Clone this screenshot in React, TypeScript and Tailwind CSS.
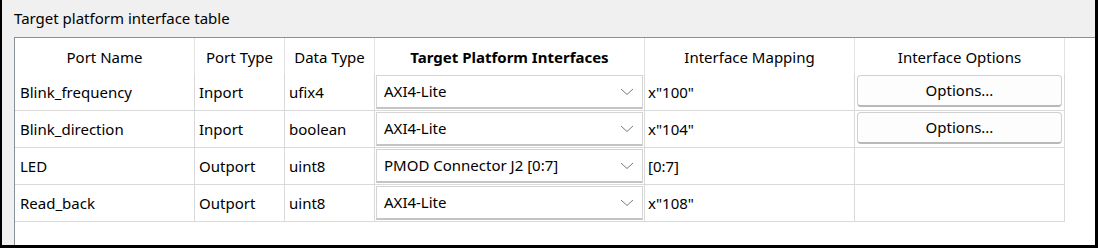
import React from "react";

const cols = ["w-[180px]", "w-[90px]", "w-[90px]", "w-[270px]", "w-[210px]", "w-[210px]"];

type Row = { name: string; type: string; dt: string; iface: string; map: string; opt: boolean };
const rows: Row[] = [
  { name: "Blink_frequency", type: "Inport", dt: "ufix4", iface: "AXI4-Lite", map: 'x"100"', opt: true },
  { name: "Blink_direction", type: "Inport", dt: "boolean", iface: "AXI4-Lite", map: 'x"104"', opt: true },
  { name: "LED", type: "Outport", dt: "uint8", iface: "PMOD Connector J2 [0:7]", map: "[0:7]", opt: false },
  { name: "Read_back", type: "Outport", dt: "uint8", iface: "AXI4-Lite", map: 'x"108"', opt: false },
];

function Chevron() {
  return (
    <svg width="14" height="8" viewBox="0 0 14 8" className="shrink-0">
      <path d="M1 1 L7 6.5 L13 1" fill="none" stroke="#7a7a7a" strokeWidth="1" />
    </svg>
  );
}

export default function App() {
  const font = { fontFamily: '"Noto Sans", "Open Sans", sans-serif' };
  return (
    <div
      className="w-[1098px] h-[248px] bg-[#f0f0f0] border-l-2 border-r-[3px] border-b-[3px] border-black flex flex-col overflow-hidden text-[15px] text-black"
      style={font}
    >
      <div className="h-[37px] pl-[12px] flex items-center">Target platform interface table</div>
      <div className="ml-[12px] flex-1 bg-white border-t border-l border-[#8a9098]">
        <div className="flex h-[36px]">
          {["Port Name", "Port Type", "Data Type", "Target Platform Interfaces", "Interface Mapping", "Interface Options"].map((h, i) => (
            <div
              key={h}
              className={`${cols[i]} border-r border-[#e3e3e3] flex items-center justify-center pt-[2px] ${i === 3 ? "font-bold" : ""}`}
            >
              {h}
            </div>
          ))}
        </div>
        {rows.map((r) => (
          <div key={r.name} className="flex h-[37px] border-b border-[#d9d9d9] w-[1050px]">
            <div className={`${cols[0]} border-r border-[#d9d9d9] flex items-center pl-[5px]`}>{r.name}</div>
            <div className={`${cols[1]} border-r border-[#d9d9d9] flex items-center pl-[4px]`}>{r.type}</div>
            <div className={`${cols[2]} border-r border-[#d9d9d9] flex items-center pl-[4px]`}>{r.dt}</div>
            <div className={`${cols[3]} border-r border-[#d9d9d9] flex items-center px-[1px] py-[1px]`}>
              <div className="flex-1 h-full bg-white border border-[#d4d4d4] border-b-2 border-b-[#c4c4c4] flex items-center justify-between pl-[7px] pr-[8px]">
                <span>{r.iface}</span>
                <Chevron />
              </div>
            </div>
            <div className={`${cols[4]} border-r border-[#d9d9d9] flex items-center pl-[3px]`}>{r.map}</div>
            <div className={`${cols[5]} border-r border-[#d9d9d9] flex items-center px-[2px] pt-[1px] pb-[3px]`}>
              {r.opt && (
                <div className="flex-1 h-full rounded-[4px] bg-[#fdfdfd] border border-[#d0d0d0] border-b-2 border-b-[#b8b8b8] flex items-center justify-center">
                  Options...
                </div>
              )}
            </div>
          </div>
        ))}
      </div>
    </div>
  );
}
